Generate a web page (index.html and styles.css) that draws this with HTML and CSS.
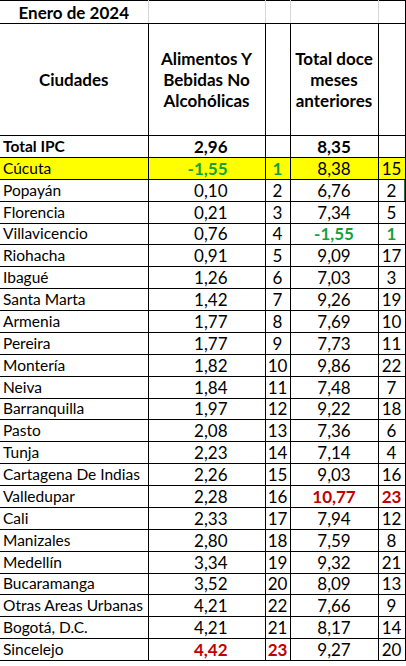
FILE: index.html
```html
<!DOCTYPE html>
<html lang="es">
<head>
<meta charset="utf-8">
<title>IPC Enero de 2024</title>
<link rel="stylesheet" href="styles.css">
</head>
<body>
<table class="ipc">
  <colgroup>
    <col class="c-city">
    <col class="c-val">
    <col class="c-rank">
    <col class="c-total">
    <col class="c-rank2">
  </colgroup>
  <tr class="title-row">
    <td class="title">Enero de 2024</td>
    <td class="grid"></td>
    <td class="grid"></td>
    <td class="grid"></td>
    <td></td>
  </tr>
  <tr class="head-row">
    <td class="head">Ciudades</td>
    <td class="head">Alimentos Y<br>Bebidas No<br>Alcohólicas</td>
    <td></td>
    <td class="head">Total doce<br>meses<br>anteriores</td>
    <td></td>
  </tr>
  <tr class="bold-row">
    <td class="city">Total IPC</td><td class="val">2,96</td><td class="rank"></td><td class="total">8,35</td><td class="rank"></td>
  </tr>
  <tr class="hl">
    <td class="city">Cúcuta</td><td class="val green">-1,55</td><td class="rank green">1</td><td class="total">8,38</td><td class="rank">15</td>
  </tr>
  <tr>
    <td class="city">Popayán</td><td class="val">0,10</td><td class="rank">2</td><td class="total">6,76</td><td class="rank sel">2<span class="sel-mark"></span></td>
  </tr>
  <tr>
    <td class="city">Florencia</td><td class="val">0,21</td><td class="rank">3</td><td class="total">7,34</td><td class="rank">5</td>
  </tr>
  <tr>
    <td class="city">Villavicencio</td><td class="val">0,76</td><td class="rank">4</td><td class="total green">-1,55</td><td class="rank green">1</td>
  </tr>
  <tr>
    <td class="city">Riohacha</td><td class="val">0,91</td><td class="rank">5</td><td class="total">9,09</td><td class="rank">17</td>
  </tr>
  <tr>
    <td class="city">Ibagué</td><td class="val">1,26</td><td class="rank">6</td><td class="total">7,03</td><td class="rank">3</td>
  </tr>
  <tr>
    <td class="city">Santa Marta</td><td class="val">1,42</td><td class="rank">7</td><td class="total">9,26</td><td class="rank">19</td>
  </tr>
  <tr>
    <td class="city">Armenia</td><td class="val">1,77</td><td class="rank">8</td><td class="total">7,69</td><td class="rank">10</td>
  </tr>
  <tr>
    <td class="city">Pereira</td><td class="val">1,77</td><td class="rank">9</td><td class="total">7,73</td><td class="rank">11</td>
  </tr>
  <tr>
    <td class="city">Montería</td><td class="val">1,82</td><td class="rank">10</td><td class="total">9,86</td><td class="rank">22</td>
  </tr>
  <tr>
    <td class="city">Neiva</td><td class="val">1,84</td><td class="rank">11</td><td class="total">7,48</td><td class="rank">7</td>
  </tr>
  <tr>
    <td class="city">Barranquilla</td><td class="val">1,97</td><td class="rank">12</td><td class="total">9,22</td><td class="rank">18</td>
  </tr>
  <tr>
    <td class="city">Pasto</td><td class="val">2,08</td><td class="rank">13</td><td class="total">7,36</td><td class="rank">6</td>
  </tr>
  <tr>
    <td class="city">Tunja</td><td class="val">2,23</td><td class="rank">14</td><td class="total">7,14</td><td class="rank">4</td>
  </tr>
  <tr>
    <td class="city">Cartagena De Indias</td><td class="val">2,26</td><td class="rank">15</td><td class="total">9,03</td><td class="rank">16</td>
  </tr>
  <tr>
    <td class="city">Valledupar</td><td class="val">2,28</td><td class="rank">16</td><td class="total red">10,77</td><td class="rank red">23</td>
  </tr>
  <tr>
    <td class="city">Cali</td><td class="val">2,33</td><td class="rank">17</td><td class="total">7,94</td><td class="rank">12</td>
  </tr>
  <tr>
    <td class="city">Manizales</td><td class="val">2,80</td><td class="rank">18</td><td class="total">7,59</td><td class="rank">8</td>
  </tr>
  <tr>
    <td class="city">Medellín</td><td class="val">3,34</td><td class="rank">19</td><td class="total">9,32</td><td class="rank">21</td>
  </tr>
  <tr>
    <td class="city">Bucaramanga</td><td class="val">3,52</td><td class="rank">20</td><td class="total">8,09</td><td class="rank">13</td>
  </tr>
  <tr>
    <td class="city">Otras Areas Urbanas</td><td class="val">4,21</td><td class="rank">22</td><td class="total">7,66</td><td class="rank">9</td>
  </tr>
  <tr>
    <td class="city">Bogotá, D.C.</td><td class="val">4,21</td><td class="rank">21</td><td class="total">8,17</td><td class="rank">14</td>
  </tr>
  <tr>
    <td class="city">Sincelejo</td><td class="val red">4,42</td><td class="rank red">23</td><td class="total">9,27</td><td class="rank">20</td>
  </tr>
</table>
</body>
</html>
```

FILE: styles.css
```css
html, body {
  margin: 0;
  padding: 0;
  background: #ffffff;
}

body {
  font-family: Lato, "Open Sans", "Liberation Sans", sans-serif;
  font-size: 17px;
  color: #000000;
}

.ipc {
  border-collapse: collapse;
  table-layout: fixed;
  width: 405px;
}

.c-city { width: 148px; }
.c-val { width: 117px; }
.c-rank { width: 25px; }
.c-total { width: 88px; }
.c-rank2 { width: 27px; }

.ipc td {
  border: 1px solid #000000;
  padding: 0 2px 1px;
  white-space: nowrap;
  overflow: hidden;
  vertical-align: bottom;
  line-height: 19px;
  height: 21.875px;
  box-sizing: border-box;
}

.ipc td:first-child {
  border-left: none;
}

.ipc .title-row td {
  height: 23px;
}

.ipc td.grid {
  border-right-color: #d6d6d6;
}

.ipc td.title {
  font-weight: bold;
  text-align: center;
  border-right-color: #d6d6d6;
  vertical-align: middle;
  padding: 0 2px;
}

.ipc .head-row td {
  height: 112px;
  vertical-align: middle;
}

.ipc td.head {
  font-weight: bold;
  text-align: center;
  line-height: 21px;
}

.bold-row td {
  font-weight: bold;
}

.hl td {
  background: #ffff00;
}

.ipc td.city {
  text-align: left;
  padding-left: 3px;
  padding-right: 0;
  font-size: 15.5px;
  overflow: visible;
}

.ipc td.val {
  text-align: right;
  padding-right: 37px;
}

.rank,
.total {
  text-align: center;
}

.ipc td.rank {
  padding-left: 0;
  padding-right: 0;
}

.green {
  color: #13a33c;
  font-weight: bold;
}

.red {
  color: #c00000;
  font-weight: bold;
}

.sel {
  position: relative;
}

.sel-mark {
  position: absolute;
  right: -1px;
  top: -1px;
  bottom: -1px;
  width: 2px;
  background: #217346;
}
```
